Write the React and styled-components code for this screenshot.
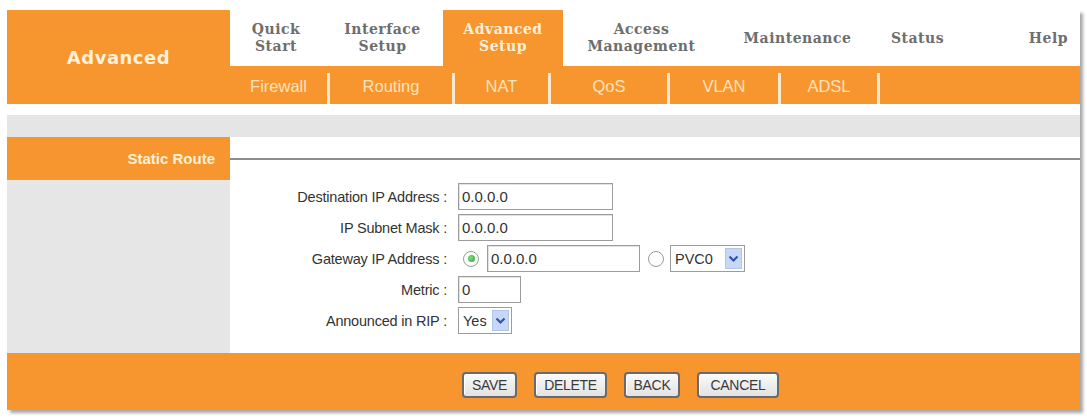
import React from 'react';
import styled, { createGlobalStyle } from 'styled-components';

const orange = '#f7952e';
const cream = '#fff0d8';

const GlobalStyle = createGlobalStyle`
  body {
    margin: 0;
    background: #fff;
    font-family: "Liberation Sans", Arial, sans-serif;
  }
`

const Page = styled.div`
  padding: 10px 0 8px 7px;
`

const Panel = styled.div`
  width: 1073px;
  background: #fff;
  box-shadow: 3px 3px 3px rgba(0,0,0,.35);
`

const Header = styled.div`
  display: grid;
  grid-template-columns: 223px 1fr;
  height: 94px;
`

const Brand = styled.div`
  background: ${orange};
  color: ${cream};
  font-family: "DejaVu Sans", sans-serif;
  font-weight: bold;
  font-size: 18px;
  letter-spacing: .5px;
  display: flex;
  align-items: center;
  justify-content: center;
`

const Menus = styled.div`
  display: flex;
  flex-direction: column;
`

const TopNav = styled.div`
  display: flex;
  height: 56px;
`

const NavItem = styled.div`
  width: ${p => p.w ? p.w + 'px' : 'auto'};
  flex: ${p => p.w ? 'none' : 1};
  display: flex;
  align-items: center;
  justify-content: ${p => p.right ? 'flex-end' : 'center'};
  padding-right: ${p => p.right ? '12px' : '0'};
  text-align: center;
  background: ${p => p.active ? orange : 'transparent'};
  color: ${p => p.active ? cream : '#6e6e6e'};
  font-family: "DejaVu Serif", serif;
  font-weight: bold;
  font-size: 14px;
  line-height: 17px;
  letter-spacing: .5px;
`

const SubNav = styled.div`
  display: flex;
  align-items: flex-end;
  height: 38px;
  background: ${orange};
`

const SubItem = styled.div`
  width: ${p => p.w}px;
  height: 31px;
  box-sizing: border-box;
  border-right: 3px solid #fde9cf;
  display: flex;
  align-items: center;
  justify-content: center;
  padding-bottom: 4px;
  color: #ffe2bb;
  font-size: 16.5px;
`

const Gap = styled.div`
  height: 11px;
`

const Band = styled.div`
  height: 22px;
  background: #e5e5e5;
`

const SectionRow = styled.div`
  display: grid;
  grid-template-columns: 223px 1fr;
  height: 43px;
`

const SectionTitle = styled.div`
  background: ${orange};
  color: ${cream};
  font-weight: bold;
  font-size: 15px;
  display: flex;
  align-items: center;
  justify-content: flex-end;
  padding-right: 15px;
`

const RuleCell = styled.div`
  display: flex;
  align-items: center;
`

const Rule = styled.div`
  width: 100%;
  height: 2px;
  background: #8c8c8c;
`

const Body = styled.div`
  display: grid;
  grid-template-columns: 223px 1fr;
  height: 173px;
`

const SideFill = styled.div`
  background: #e6e6e6;
`

const Form = styled.div`
  display: grid;
  grid-template-columns: 217px auto;
  grid-auto-rows: 27px;
  column-gap: 11px;
  row-gap: 4px;
  padding-top: 3px;
  align-content: start;
`

const Label = styled.div`
  align-self: center;
  text-align: right;
  font-size: 14.5px;
  letter-spacing: -.2px;
  color: #333;
  white-space: nowrap;
`

const Field = styled.div`
  display: flex;
  align-items: center;
`

const TextBox = styled.input`
  width: ${p => p.w}px;
  height: 27px;
  box-sizing: border-box;
  margin: 0 ${p => p.after || 0}px 0 ${p => p.before || 0}px;
  padding: 0 0 0 3px;
  border: 1px solid #9c9c9c;
  box-shadow: inset 1px 1px 0 #e2e2e2;
  font-family: "Liberation Sans", Arial, sans-serif;
  font-size: 15px;
  color: #333;
  background: #fff;
  outline: none;
`

const Radio = styled.span`
  width: 16px;
  height: 16px;
  box-sizing: border-box;
  border-radius: 50%;
  border: 1.5px solid ${p => p.on ? '#8aa88a' : '#9a9a9a'};
  background: #fff;
  display: flex;
  align-items: center;
  justify-content: center;
  margin: 0 ${p => p.after || 0}px 0 ${p => p.before || 0}px;

  &::before {
    content: "";
    display: ${p => p.on ? 'block' : 'none'};
    width: 7px;
    height: 7px;
    border-radius: 50%;
    background: radial-gradient(circle at 40% 40%, #7ee07e, #2f9e2f);
  }
`

const Select = styled.div`
  width: ${p => p.w}px;
  height: 27px;
  box-sizing: border-box;
  border: 1px solid #9c9c9c;
  background: #fff;
  display: flex;
  align-items: center;
  justify-content: space-between;
  padding: 2px 2px 2px 4px;
  font-size: 14.5px;
  color: #333;
`

const Arrow = styled.span`
  width: 17px;
  height: 100%;
  background: #c7d7f7;
  border: 1px solid #b2c4ea;
  box-sizing: border-box;
  display: flex;
  align-items: center;
  justify-content: center;
`

const Footer = styled.div`
  height: 57px;
  background: ${orange};
  display: flex;
  gap: 17px;
  padding: 19px 0 0 455px;
  box-sizing: border-box;
`

const Button = styled.button`
  width: ${p => p.w}px;
  height: 26px;
  padding: 0;
  border: 2px solid #6a6a6a;
  border-radius: 4px;
  background: linear-gradient(#fafafa, #e2e2e2);
  box-shadow: inset 1px 1px 0 #fff;
  font-family: "Liberation Sans", Arial, sans-serif;
  font-size: 14px;
  letter-spacing: -.3px;
  color: #3a3a3a;
`

const Chevron = () => (
  <svg width="11" height="8" viewBox="0 0 11 8">
    <path d="M1.5 1.5 L5.5 5.5 L9.5 1.5" fill="none" stroke="#2f55a8" strokeWidth="2.2" />
  </svg>
)

const topMenu = [
  { label: <>Quick<br />Start</>, w: 92 },
  { label: <>Interface<br />Setup</>, w: 121 },
  { label: <>Advanced<br />Setup</>, w: 120, active: true },
  { label: <>Access<br />Management</>, w: 157 },
  { label: 'Maintenance', w: 155 },
  { label: 'Status', w: 85 },
  { label: 'Help', right: true },
]

const subMenu = [
  ['Firewall', 100],
  ['Routing', 125],
  ['NAT', 96],
  ['QoS', 119],
  ['VLAN', 111],
  ['ADSL', 99],
]

const App = () => {
  return (
    <Page>
      <GlobalStyle />
      <Panel>
        <Header>
          <Brand>Advanced</Brand>
          <Menus>
            <TopNav>
              {topMenu.map((m, i) => (
                <NavItem key={i} w={m.w} active={m.active} right={m.right}>{m.label}</NavItem>
              ))}
            </TopNav>
            <SubNav>
              {subMenu.map(([name, w]) => (
                <SubItem key={name} w={w}>{name}</SubItem>
              ))}
            </SubNav>
          </Menus>
        </Header>
        <Gap />
        <Band />
        <SectionRow>
          <SectionTitle>Static Route</SectionTitle>
          <RuleCell><Rule /></RuleCell>
        </SectionRow>
        <Body>
          <SideFill />
          <Form>
            <Label>Destination IP Address :</Label>
            <Field><TextBox w={155} defaultValue="0.0.0.0" /></Field>

            <Label>IP Subnet Mask :</Label>
            <Field><TextBox w={155} defaultValue="0.0.0.0" /></Field>

            <Label>Gateway IP Address :</Label>
            <Field>
              <Radio on before={5} after={8} />
              <TextBox w={153} after={8} defaultValue="0.0.0.0" />
              <Radio after={6} />
              <Select w={75}>PVC0<Arrow><Chevron /></Arrow></Select>
            </Field>

            <Label>Metric :</Label>
            <Field><TextBox w={63} defaultValue="0" /></Field>

            <Label>Announced in RIP :</Label>
            <Field><Select w={54}>Yes<Arrow><Chevron /></Arrow></Select></Field>
          </Form>
        </Body>
        <Footer>
          <Button w={55}>SAVE</Button>
          <Button w={73}>DELETE</Button>
          <Button w={56}>BACK</Button>
          <Button w={82}>CANCEL</Button>
        </Footer>
      </Panel>
    </Page>
  )
}

export default App;
